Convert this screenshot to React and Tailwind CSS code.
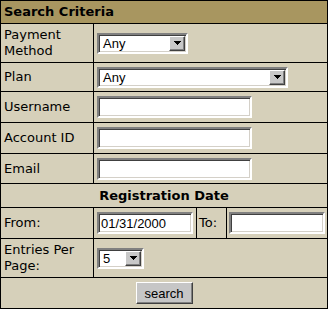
import React from "react";

const sunken =
  "border-2 border-t-[#808080] border-l-[#808080] border-r-white border-b-white shadow-[inset_1px_1px_0_#404040,inset_-1px_-1px_0_#d4d0c8] bg-white";

function Arrow() {
  return (
    <svg width="7" height="4" viewBox="0 0 7 4" className="block">
      <path d="M0 0h7L3.5 4z" fill="#000" shapeRendering="crispEdges" />
    </svg>
  );
}

function Select({ w, value }) {
  return (
    <div className={`${sunken} ${w} h-[21px] flex items-stretch p-[1px]`}>
      <div className="flex-1 flex items-center pl-[3px] text-[13px] font-['Liberation_Sans',sans-serif] text-black leading-none">
        {value}
      </div>
      <div className="w-[16px] bg-[#c8c8c8] border border-t-white border-l-white border-r-[#404040] border-b-[#404040] shadow-[inset_-1px_-1px_0_#808080] flex items-center justify-center">
        <Arrow />
      </div>
    </div>
  );
}

function Input({ w, value }) {
  return (
    <div className={`${sunken} ${w} h-[22px] flex items-center pl-[2px] text-[13px] font-['Liberation_Sans',sans-serif] text-black leading-none`}>
      {value}
    </div>
  );
}

function Row({ h, label, children, last }) {
  return (
    <div className={`flex ${h} ${last ? "" : "border-b border-black"}`}>
      <div className="w-[93px] shrink-0 border-r border-black flex items-center pl-[3px] pr-[2px] leading-[16px]">
        {label}
      </div>
      <div className="flex-1 flex items-center pl-[3px]">{children}</div>
    </div>
  );
}

export default function App() {
  return (
    <div className="w-[328px] h-[309px] border border-black bg-[#d6d0ba] text-[13px] text-black font-['DejaVu_Sans',sans-serif] flex flex-col">
      <div className="h-[23px] border-b border-black bg-[#a89660] font-bold flex items-center pl-[3px]">
        Search Criteria
      </div>
      <Row h="h-[39px]" label={<span>Payment<br />Method</span>}>
        <Select w="w-[91px]" value="Any" />
      </Row>
      <Row h="h-[29px]" label="Plan">
        <Select w="w-[191px]" value="Any" />
      </Row>
      <Row h="h-[31px]" label="Username">
        <Input w="w-[155px]" />
      </Row>
      <Row h="h-[31px]" label="Account ID">
        <Input w="w-[155px]" />
      </Row>
      <Row h="h-[30px]" label="Email">
        <Input w="w-[155px]" />
      </Row>
      <div className="h-[24px] border-b border-black flex items-center justify-center font-bold">
        Registration Date
      </div>
      <div className="flex h-[31px] border-b border-black">
        <div className="w-[93px] shrink-0 border-r border-black flex items-center pl-[3px]">From:</div>
        <div className="w-[103px] shrink-0 border-r border-black flex items-center pl-[3px]">
          <Input w="w-[96px]" value="01/31/2000" />
        </div>
        <div className="w-[30px] shrink-0 border-r border-black flex items-center pl-[2px]">To:</div>
        <div className="flex-1 flex items-center pl-[2px]">
          <Input w="w-[96px]" />
        </div>
      </div>
      <Row h="h-[39px]" label={<span>Entries Per<br />Page:</span>}>
        <Select w="w-[47px]" value="5" />
      </Row>
      <div className="h-[30px] flex items-center justify-center">
        <button className="w-[57px] h-[22px] bg-[#c6c6c6] border border-t-white border-l-white border-r-[#404040] border-b-[#404040] shadow-[inset_-1px_-1px_0_#808080] text-[13px] font-['Liberation_Sans',sans-serif] text-black leading-none">
          search
        </button>
      </div>
    </div>
  );
}
